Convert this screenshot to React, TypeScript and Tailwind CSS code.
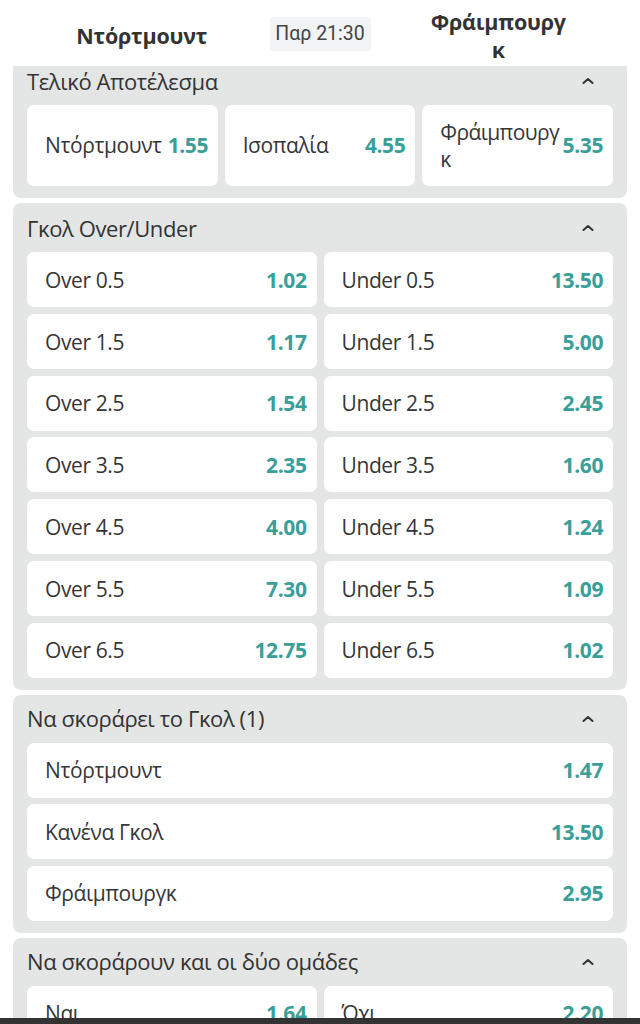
import React from "react";

const font = { fontFamily: '"Open Sans", "Noto Sans", sans-serif' };

function Chevron() {
  return (
    <svg width="14" height="10" viewBox="0 0 14 10" className="mr-[18px]">
      <path d="M2.5 7 L7 3 L11.5 7" fill="none" stroke="#333" strokeWidth="2" strokeLinecap="round" strokeLinejoin="round" />
    </svg>
  );
}

function Title({ text }: { text: string }) {
  return (
    <div className="flex items-center justify-between h-[26px] mb-[11px]">
      <span className="text-[22px] tracking-[-0.4px] text-[#333]">{text}</span>
      <Chevron />
    </div>
  );
}

function Odd({ label, odd }: { label: string; odd: string }) {
  return (
    <div className="flex items-center justify-between bg-white rounded-[7px] h-[55px] pl-[18px] pr-[10px] pt-[2px]">
      <span className="text-[21px] tracking-[-0.4px] text-[#363636]">{label}</span>
      <span className="text-[21px] tracking-[-0.4px] font-bold text-[#3a9e99]">{odd}</span>
    </div>
  );
}

const ou = [
  ["0.5", "1.02", "13.50"],
  ["1.5", "1.17", "5.00"],
  ["2.5", "1.54", "2.45"],
  ["3.5", "2.35", "1.60"],
  ["4.5", "4.00", "1.24"],
  ["5.5", "7.30", "1.09"],
  ["6.5", "12.75", "1.02"],
];

export default function App() {
  return (
    <div className="relative w-[640px] h-[1024px] overflow-hidden bg-white" style={font}>
      {/* header */}
      <div className="flex items-center h-[66px] pt-[6px] px-[14px]">
        <div className="flex-1 flex justify-center">
          <span className="text-[21.5px] tracking-[-0.2px] font-bold text-[#333] leading-[28px]">Ντόρτμουντ</span>
        </div>
        <div
          className="w-[101px] h-[34px] -mt-[4px] flex items-center justify-center bg-[#f1f3f5] rounded-[4px] text-[19.5px] text-[#444]"
          style={{ fontFamily: 'Roboto, "Open Sans", sans-serif' }}
        >
          Παρ 21:30
        </div>
        <div className="flex-1 flex justify-center">
          <span className="text-center text-[21.5px] tracking-[-0.2px] font-bold text-[#333] leading-[28px]">
            Φράιμπουργ
            <br />κ
          </span>
        </div>
      </div>

      <div className="flex flex-col gap-[5px] px-[13px]">
        {/* section 1 */}
        <div className="bg-[#e4e6e6] rounded-b-[8px] px-[14px] pt-0 pb-[12px]">
          <div className="flex items-center justify-between h-[30px] mb-[9px]">
            <span className="text-[22px] tracking-[-0.4px] text-[#333]">Τελικό Αποτέλεσμα</span>
            <Chevron />
          </div>
          <div className="grid grid-cols-3 gap-[7px]">
            <div className="flex items-center bg-white rounded-[7px] h-[81px] pl-[18px] pr-[10px] gap-[6px]">
              <span className="text-[21px] tracking-[-0.4px] text-[#363636]">Ντόρτμουντ</span>
              <span className="text-[21px] tracking-[-0.4px] font-bold text-[#3a9e99]">1.55</span>
            </div>
            <div className="flex items-center justify-between bg-white rounded-[7px] h-[81px] pl-[18px] pr-[10px]">
              <span className="text-[21px] tracking-[-0.4px] text-[#363636]">Ισοπαλία</span>
              <span className="text-[21px] tracking-[-0.4px] font-bold text-[#3a9e99]">4.55</span>
            </div>
            <div className="flex items-center justify-between bg-white rounded-[7px] h-[81px] pl-[18px] pr-[10px]">
              <span className="text-[21px] tracking-[-0.6px] leading-[27px] text-[#363636] whitespace-nowrap">
                Φράιμπουργ
                <br />κ
              </span>
              <span className="text-[21px] tracking-[-0.4px] font-bold text-[#3a9e99]">5.35</span>
            </div>
          </div>
        </div>

        {/* section 2 */}
        <div className="bg-[#e4e6e6] rounded-[8px] px-[14px] pt-[12px] pb-[12px]">
          <Title text="Γκολ Over/Under" />
          <div className="grid grid-cols-2 gap-x-[7px] gap-y-[6.75px]">
            {ou.map(([n, o, u]) => (
              <React.Fragment key={n}>
                <Odd label={`Over ${n}`} odd={o} />
                <Odd label={`Under ${n}`} odd={u} />
              </React.Fragment>
            ))}
          </div>
        </div>

        {/* section 3 */}
        <div className="bg-[#e4e6e6] rounded-[8px] px-[14px] pt-[11px] pb-[12px]">
          <Title text="Να σκοράρει το Γκολ (1)" />
          <div className="flex flex-col gap-[6.5px]">
            <Odd label="Ντόρτμουντ" odd="1.47" />
            <Odd label="Κανένα Γκολ" odd="13.50" />
            <Odd label="Φράιμπουργκ" odd="2.95" />
          </div>
        </div>

        {/* section 4 */}
        <div className="bg-[#e4e6e6] rounded-[8px] px-[14px] pt-[11px] pb-[12px]">
          <Title text="Να σκοράρουν και οι δύο ομάδες" />
          <div className="grid grid-cols-2 gap-[7px]">
            <Odd label="Ναι" odd="1.64" />
            <Odd label="Όχι" odd="2.20" />
          </div>
        </div>
      </div>

      <div className="absolute left-0 right-0 bottom-0 h-[6px] bg-[#333333]" />
    </div>
  );
}
